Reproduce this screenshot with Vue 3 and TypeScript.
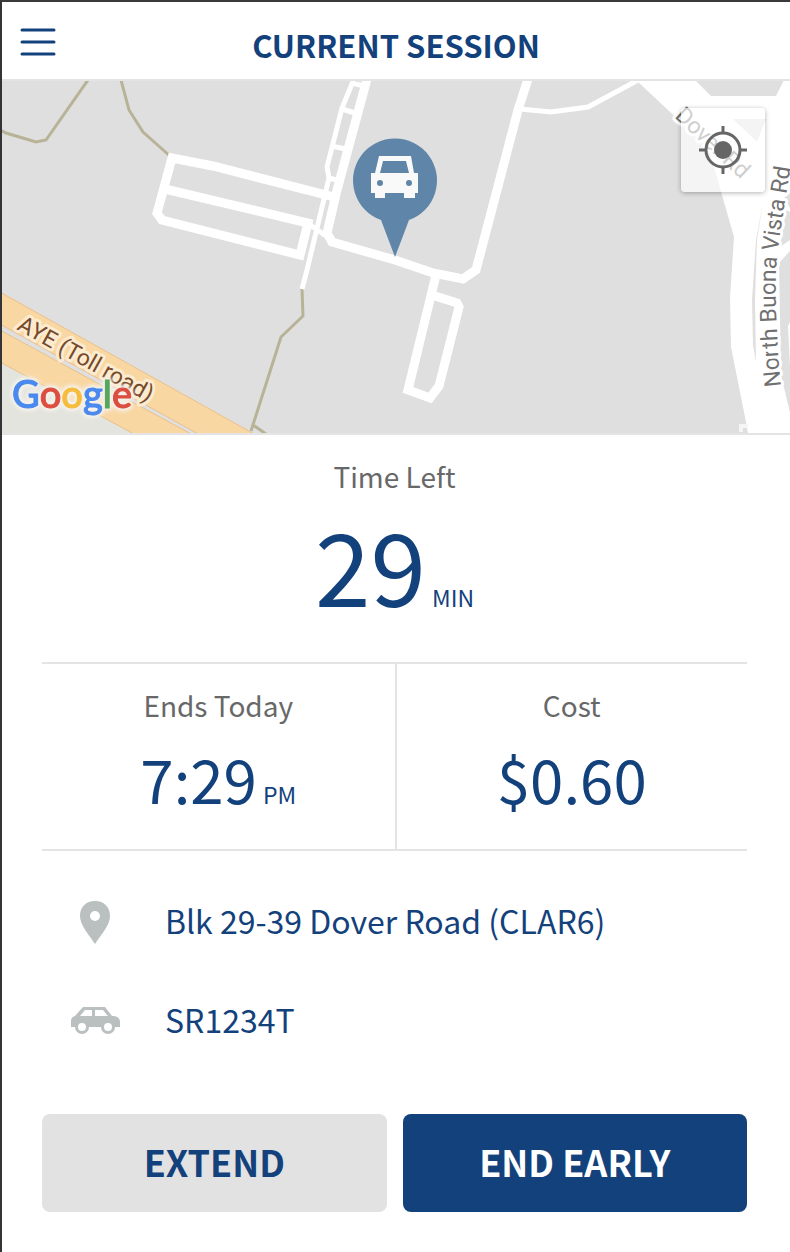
<script setup lang="ts">
import { ref } from 'vue'

interface Reading {
  label: string
  value: string
  unit?: string
}

const timeLeft: Reading = { label: 'Time Left', value: '29', unit: 'MIN' }
const readings: Reading[] = [
  { label: 'Ends Today', value: '7:29', unit: 'PM' },
  { label: 'Cost', value: '$0.60' },
]
const carPark = 'Blk 29-39 Dover Road (CLAR6)'
const vehicle = 'SR1234T'
const logo = [
  { char: 'G', tone: 'blue' },
  { char: 'o', tone: 'red' },
  { char: 'o', tone: 'yellow' },
  { char: 'g', tone: 'blue' },
  { char: 'l', tone: 'green' },
  { char: 'e', tone: 'red' },
]
const menuOpen = ref(false)
</script>

<template>
  <main class="screen">
    <header class="bar">
      <button class="menu" type="button" aria-label="Menu" :aria-expanded="menuOpen" @click="menuOpen = !menuOpen">
        <svg width="36" height="30" viewBox="0 0 36 30" aria-hidden="true">
          <path d="M2 3H34M2 15H34M2 27H34" />
        </svg>
      </button>
      <h1>CURRENT SESSION</h1>
    </header>

    <section class="map" aria-label="Map">
      <svg class="tiles" viewBox="2 81 788 352" preserveAspectRatio="xMidYMid slice" aria-hidden="true">
        <rect x="2" y="81" width="788" height="352" fill="#dfdfdf" />

        <!-- expressway -->
        <path fill="#e3e4de" d="M2 363L134 434H2Z" />
        <path class="toll" d="M-2 291L256 435H200L-2 323Z" />
        <path class="toll" d="M-2 329L193 435H136L-2 361Z" />

        <!-- footpaths -->
        <path class="trail" d="M0 130L6 133L36 142L46 140L88 80" />
        <path class="trail" d="M121 80L129 110L143 132L170 156" />
        <path class="trail" d="M302 289L303 316L281 337L251 431M253 425L266 434" />

        <!-- lanes -->
        <path class="road" d="M334 197L213 166L172 158L157 213L162 220L300 255L308 223L165 189" />
        <path class="road" d="M367 79L337 190L327 233L332 242L395 260L433 273L463 279L476 270L518 110L528 79" />
        <path class="road" d="M436 275L408 390L430 398L439 386L459 307L457 303L435 296" />
        <path class="lane" d="M354 79L342 108L327 167L329 178L307 270L302 289M352 83L364 86M342 109L355 113M331 146L346 149M329 178L340 181M306 222L326 236" />
        <path class="lane" d="M520 109L551 112L588 107L642 78" />

        <!-- main roads -->
        <path fill="#fff" d="M636 80H790V434H748L746 422L731 347L730 298L734 237L710 153Q700 138 684 125Z" />
        <path fill="#dfdfdf" d="M695 80L711 96H776L784 80Z" />
        <path fill="#dfdfdf" d="M733 119H766L757 142Z" />
        <path fill="#dfdfdf" d="M763 203L757 240L755 300L756 362L753 345L752 300L756 240Z" />
        <path fill="#dfdfdf" d="M784 198L790 193V208ZM786 210L790 212V240L780 247ZM779 263L790 251V322L788 326L790 366V413L781 375Z" />
        <path class="kerb" d="M748 426H741V432" />

        <text class="label street" transform="translate(674 117) rotate(43)">Dover Rd</text>
        <path id="vista" fill="none" d="M781 386C777 352 775 292 776 270C778 242 783 215 792 158" />
        <text class="label street"><textPath href="#vista">North Buona Vista Rd</textPath></text>
        <text class="label tollname" transform="translate(16 329) rotate(29)">AYE (Toll road)</text>

        <!-- parked car marker -->
        <path fill="#5f86a8" d="M395 257L381 220A42 42 0 1 1 409 220Z" />
        <path
          fill="#f9f9f9"
          fill-rule="evenodd"
          d="M379 156H411L414 173H418V193H415V198H404V193H385V198H375V193H371V173H375ZM383 161L380 173H409L406 161ZM380 180A3 3 0 1 0 380 186A3 3 0 1 0 380 180ZM409 180A3 3 0 1 0 409 186A3 3 0 1 0 409 180Z"
        />
      </svg>
      <a class="google" href="#" aria-label="Google">
        <span v-for="(part, i) in logo" :key="i" :class="part.tone">{{ part.char }}</span>
      </a>
      <button class="locate" type="button" aria-label="Centre on my location">
        <svg width="48" height="48" viewBox="0 0 48 48" aria-hidden="true">
          <circle cx="24" cy="24" r="9" fill="#666" />
          <circle cx="24" cy="24" r="17" fill="none" stroke="#666" stroke-width="3" />
          <path d="M24 0V8M24 40V48M0 24H8M40 24H48" stroke="#666" stroke-width="3" />
        </svg>
      </button>
    </section>

    <div class="details">
      <section class="reading main-reading">
        <h2>{{ timeLeft.label }}</h2>
        <p class="figure">
          <span class="huge">{{ timeLeft.value }}</span>
          <span class="unit">{{ timeLeft.unit }}</span>
        </p>
      </section>

      <div class="split">
        <section v-for="item in readings" :key="item.label" class="reading">
          <h2>{{ item.label }}</h2>
          <p class="figure">
            <span class="large">{{ item.value }}</span>
            <span v-if="item.unit" class="unit">{{ item.unit }}</span>
          </p>
        </section>
      </div>

      <ul class="facts">
        <li>
          <svg width="50" height="48" viewBox="0 0 50 48" aria-hidden="true">
            <path fill-rule="evenodd" d="M25 5C16 5 10 11 10 20C10 29 19 39 25 48C31 39 40 29 40 20C40 11 34 5 25 5ZM25 15A5 5 0 1 1 25 25A5 5 0 1 1 25 15Z" />
          </svg>
          <span>{{ carPark }}</span>
        </li>
        <li>
          <svg width="50" height="48" viewBox="0 0 50 48" aria-hidden="true">
            <path
              fill-rule="evenodd"
              d="M13 12H35L42 21H44Q50 22 50 27V32H1V26Q1 22 5 21ZM15 15L10 21H22V15ZM25 15V21H38L33 15Z"
            />
            <circle cx="12" cy="32" r="7" />
            <circle cx="38" cy="32" r="7" />
            <circle class="hub" cx="12" cy="32" r="4" />
            <circle class="hub" cx="38" cy="32" r="4" />
          </svg>
          <span>{{ vehicle }}</span>
        </li>
      </ul>

      <div class="actions">
        <button class="secondary" type="button">EXTEND</button>
        <button class="primary" type="button">END EARLY</button>
      </div>
    </div>
  </main>
</template>

<style>
body {
  margin: 0;
  background: #fff;
}
</style>

<style scoped>
.screen {
  box-sizing: border-box;
  min-height: 100vh;
  border-top: 2px solid #3a393b;
  border-left: 2px solid #343335;
  background: #fff;
  color: #13417c;
  font-family: "Noto Sans CJK SC", "Noto Sans", sans-serif;
}

h1,
h2,
p,
ul {
  margin: 0;
  padding: 0;
}

button {
  border: 0;
  padding: 0;
  font: inherit;
  color: inherit;
  cursor: pointer;
}

.bar {
  display: grid;
  grid-template-columns: 72px 1fr 72px;
  align-items: center;
  height: 77px;
}

.menu {
  display: flex;
  align-items: center;
  justify-content: center;
  height: 77px;
  background: none;
}

.menu svg {
  margin-bottom: -3px;
  fill: none;
  stroke: #13417c;
  stroke-width: 3;
  stroke-linecap: round;
}

.bar h1 {
  padding-top: 8px;
  font-size: 31px;
  line-height: 48px;
  font-weight: 700;
  text-align: center;
}

.map {
  position: relative;
  overflow: hidden;
  border-top: 2px solid #e4e4e4;
  border-bottom: 2px solid #e4e4e4;
}

.tiles {
  display: block;
  width: 100%;
  height: 352px;
}

.toll {
  fill: #f9d7a3;
  stroke: #e9c08b;
  stroke-width: 1;
}

.trail {
  fill: none;
  stroke: #b8b296;
  stroke-width: 3;
}

.road {
  fill: none;
  stroke: #fff;
  stroke-width: 9;
}

.lane {
  fill: none;
  stroke: #fff;
  stroke-width: 5;
}

.kerb {
  fill: none;
  stroke: #f5f5f5;
  stroke-width: 4;
}

.label {
  font-family: Roboto, sans-serif;
  font-size: 23px;
  paint-order: stroke;
  stroke-width: 6;
  stroke-linejoin: round;
}

.street {
  fill: #707070;
  stroke: #fff;
}

.tollname {
  fill: #75492b;
  stroke: #fdebd0;
}

.google {
  position: absolute;
  left: 10px;
  bottom: 17px;
  font-family: Lato, sans-serif;
  font-size: 38px;
  line-height: 46px;
  font-weight: 500;
  text-decoration: none;
  display: flex;
  -webkit-text-stroke: 1px currentcolor;
  filter: drop-shadow(0 0 2px #f4f1ea) drop-shadow(0 0 2px #f4f1ea) drop-shadow(0 0 1px #f4f1ea);
}

.blue {
  color: #4a89ee;
}

.red {
  color: #dc4e41;
}

.yellow {
  color: #f6bc3e;
}

.green {
  color: #57a65c;
}

.locate {
  position: absolute;
  top: 27px;
  right: 25px;
  display: flex;
  align-items: center;
  justify-content: center;
  width: 84px;
  height: 84px;
  border-radius: 4px;
  background: rgba(255, 255, 255, 0.66);
  box-shadow: 0 1px 5px rgba(0, 0, 0, 0.3);
}

.details {
  padding: 0 43px 38px 40px;
}

.reading {
  text-align: center;
}

.reading h2 {
  font-size: 28px;
  line-height: 40px;
  font-weight: 400;
  color: #686868;
}

.figure {
  display: flex;
  justify-content: center;
  align-items: baseline;
  gap: 6px;
}

.main-reading {
  padding: 21px 0 43px;
}

.main-reading .figure {
  margin-top: 13px;
}

.huge {
  font-size: 100px;
  line-height: 110px;
}

.large {
  font-size: 60px;
  line-height: 72px;
}

.unit {
  font-size: 23px;
  line-height: 32px;
}

.split {
  display: grid;
  grid-template-columns: 1fr 1fr;
  border-top: 2px solid #e4e4e4;
  border-bottom: 2px solid #e4e4e4;
}

.split .reading {
  padding: 21px 0 35px;
}

.split .reading + .reading {
  border-left: 2px solid #e4e4e4;
}

.split .figure {
  margin-top: 17px;
}

.facts {
  display: grid;
  gap: 51px;
  padding: 45px 0 71px 28px;
  list-style: none;
}

.facts li {
  display: flex;
  align-items: center;
  gap: 45px;
  font-size: 32px;
  line-height: 48px;
}

.facts svg {
  flex: none;
  fill: #babfbf;
}

.facts .hub {
  fill: #fff;
}

.actions {
  display: grid;
  grid-template-columns: 1fr 1fr;
  gap: 16px;
}

.actions button {
  height: 98px;
  padding-bottom: 4px;
  border-radius: 8px;
  font-size: 36px;
  line-height: 48px;
  font-weight: 700;
}

.secondary {
  background: #e2e2e2;
}

.primary {
  background: #13417c;
  color: #fff;
}
</style>
